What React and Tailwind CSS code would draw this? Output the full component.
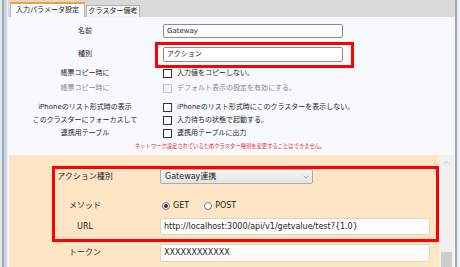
import React from "react";
import { ChevronDown, ChevronUp } from "lucide-react";

const Row = ({ label, className = "", labelClass = "", children }) => (
  <div className={`flex items-center shrink-0 ${className}`}>
    <div className={`w-[150px] text-center leading-none ${labelClass}`}>{label}</div>
    <div className="ml-[3px] flex items-center h-full">{children}</div>
  </div>
);

const Check = ({ disabled }) => (
  <span
    className={
      disabled
        ? "w-[9px] h-[9px] border border-[#c8c8c8] bg-[#f3f3f3] shrink-0"
        : "w-[9px] h-[9px] border border-[#333333] bg-white shrink-0"
    }
  />
);

const Radio = ({ checked }) => (
  <span className="w-[8px] h-[8px] rounded-full border border-[#7a7a7a] bg-white flex items-center justify-center shrink-0">
    {checked && <span className="w-[4px] h-[4px] rounded-full bg-[#333333]" />}
  </span>
);

export default function App() {
  return (
    <div className="w-[460px] h-[267px] flex bg-[#eef0f2] overflow-hidden text-[#1e1e1e] font-['DejaVu_Sans','Noto_Sans_CJK_JP',sans-serif]">
      {/* left window edge */}
      <div className="flex h-full shrink-0">
        <div className="w-[2px] bg-[#e6e9ec]" />
        <div className="w-[2px] bg-[#9ba8b5]" />
        <div className="w-[3px] bg-[#cbd5df]" />
        <div className="w-[1px] bg-[#eef1f5]" />
      </div>

      <div className="w-[447px] flex flex-col shrink-0">
        {/* tabs */}
        <div className="h-[17px] bg-[#d9d9d9] flex items-end pl-[2px] shrink-0">
          <div className="w-[75px] h-[15px] bg-[#f7f9fd] border-t-2 border-t-[#f5a02a] border-x border-x-[#b9b9b9] text-[7px] flex items-center justify-center leading-none">
            入力パラメータ設定
          </div>
          <div className="w-[54px] h-[12px] ml-[1px] bg-[#f4f4f4] border border-b-0 border-[#b3b3b3] text-[7px] flex items-center justify-center leading-none">
            クラスター備考
          </div>
        </div>

        <div className="flex-1 bg-[#f7f9fd] flex flex-col min-h-0">
          {/* upper settings */}
          <div className="h-[138px] shrink-0 pl-[2px] pt-[7px] text-[7px] flex flex-col">
            <Row label="名前" className="h-[14px]">
              <div className="w-[180px] h-[14px] border border-[#8c8c8c] rounded-[2px] bg-white px-[3px] flex items-center">
                Gateway
              </div>
            </Row>
            <Row label="種別" className="h-[15px] mt-[9px]">
              <div className="relative">
                <div className="w-[180px] h-[15px] border border-[#8c8c8c] rounded-[2px] bg-white px-[3px] flex items-center">
                  アクション
                </div>
                <div className="absolute -left-[8px] -top-[5px] w-[199px] h-[26px] border-[3px] border-[#ff0000]" />
              </div>
            </Row>
            <Row label="帳票コピー時に" className="h-[11px] mt-[6px]">
              <Check />
              <span className="ml-[5px] leading-none">入力値をコピーしない。</span>
            </Row>
            <Row label="帳票コピー時に" labelClass="text-[#8a8a8a]" className="h-[11px] mt-[4px]">
              <Check disabled />
              <span className="ml-[5px] leading-none text-[#8a8a8a]">デフォルト表示の設定を有効にする。</span>
            </Row>
            <Row label="iPhoneのリスト形式時の表示" className="h-[11px] mt-[8px]">
              <Check />
              <span className="ml-[5px] leading-none">iPhoneのリスト形式時にこのクラスターを表示しない。</span>
            </Row>
            <Row label="このクラスターにフォーカスして" className="h-[11px] mt-[2px]">
              <Check />
              <span className="ml-[5px] leading-none">入力待ちの状態で起動する。</span>
            </Row>
            <Row label="連携用テーブル" className="h-[11px] mt-[2px]">
              <Check />
              <span className="ml-[5px] leading-none">連携用テーブルに出力</span>
            </Row>
            <div className="mt-[3px] h-[8px] ml-[125px] text-[5.3px] leading-[8px] text-[#e3261d] whitespace-nowrap">
              ネットワーク設定されているためクラスター種別を変更することはできません。
            </div>
          </div>

          {/* action settings */}
          <div className="flex-1 flex ml-[1px] min-h-0">
            <div className="w-[430px] relative bg-[#fde5c6] pt-[14px] pl-[1px] text-[8px] flex flex-col">
              <div className="flex items-center h-[15px] shrink-0">
                <div className="w-[150px] text-center leading-none">アクション種別</div>
                <div className="w-[153px] h-[15px] border border-[#acacac] rounded-[2px] bg-linear-to-b from-[#f4f4f4] to-[#e5e5e5] flex items-center justify-between pl-[4px] pr-[2px]">
                  <span className="leading-none">Gateway連携</span>
                  <ChevronDown size={8} strokeWidth={1.5} color="#555555" />
                </div>
              </div>
              <div className="flex items-center h-[11px] mt-[16px] shrink-0">
                <div className="w-[150px] text-center leading-none">メソッド</div>
                <div className="flex items-center ml-[2px]">
                  <Radio checked />
                  <span className="ml-[3px] leading-none">GET</span>
                  <span className="ml-[15px]">
                    <Radio />
                  </span>
                  <span className="ml-[3px] leading-none">POST</span>
                </div>
              </div>
              <div className="flex items-center h-[17px] mt-[7px] shrink-0">
                <div className="w-[150px] text-center leading-none">URL</div>
                <div className="w-[270px] h-[17px] border border-[#ddd4c6] rounded-[2px] bg-[#fffdf9] px-[3px] flex items-center leading-none">
                  http://localhost:3000/api/v1/getvalue/test?{"{1.0}"}
                </div>
              </div>
              <div className="flex items-center h-[18px] mt-[9px] shrink-0">
                <div className="w-[150px] text-center leading-none">トークン</div>
                <div className="w-[270px] h-[18px] border border-[#ddd4c6] rounded-[2px] bg-[#fffdf9] px-[3px] flex items-center leading-none">
                  XXXXXXXXXXXX
                </div>
              </div>
              <div className="absolute left-[43px] top-[11px] w-[387px] h-[76px] border-[3px] border-[#ff0000]" />
            </div>
            {/* scrollbar */}
            <div className="w-[15px] bg-[#f0f0f0] flex flex-col">
              <div className="h-[15px] flex items-center justify-center">
                <ChevronUp size={9} strokeWidth={1.5} color="#a3a3a3" />
              </div>
              <div className="flex-1" />
              <div className="h-[15px] mx-[2px] bg-[#cdcdcd]" />
            </div>
          </div>
        </div>
      </div>

      {/* right window edge */}
      <div className="flex h-full shrink-0">
        <div className="w-[2px] bg-[#9ba8b5]" />
        <div className="w-[3px] bg-[#eef1f4]" />
      </div>
    </div>
  );
}
